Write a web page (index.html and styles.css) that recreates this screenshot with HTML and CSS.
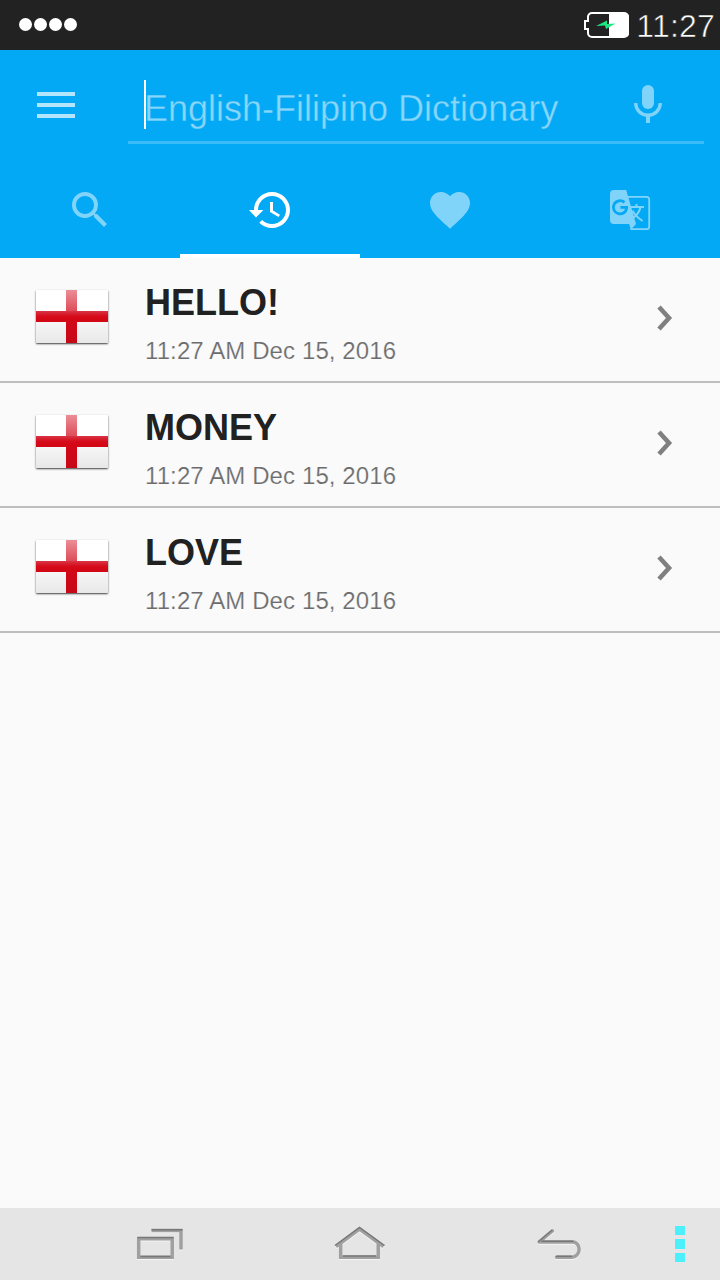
FILE: index.html
```html
<!DOCTYPE html>
<html lang="en">
<head>
    <meta charset="UTF-8">
    <meta name="viewport" content="width=device-width, initial-scale=1.0">
    <title>English-Filipino Dictionary</title>
    <link rel="stylesheet" href="styles.css">
</head>
<body>
    <div class="status-bar">
        <div class="dots"><span></span><span></span><span></span><span></span></div>
        <div class="status-right">
            <svg class="battery" width="46" height="26" viewBox="0 0 46 26">
                <path d="M8 1h32a4 4 0 0 1 4 4v16a4 4 0 0 1-4 4H8a4 4 0 0 1-4-4v-4H1V9h3V5a4 4 0 0 1 4-4z" fill="none" stroke="#fff" stroke-width="2"/>
                <path d="M25 1h16a4 4 0 0 1 4 4v16a4 4 0 0 1-4 4H25z" fill="#fff"/>
                <path d="M12 14l11-5.500v3.500l8.500-.5-9.500 5.500-1-3.500z" fill="#1de783"/>
            </svg>
            <span class="clock">11:27</span>
        </div>
    </div>

    <header class="header">
        <div class="toolbar">
            <div class="menu"><span></span><span></span><span></span></div>
            <div class="search-field">
                <div class="caret"></div>
                <div class="placeholder">English-Filipino Dictionary</div>
                <svg class="icon mic faded" viewBox="0 0 24 24">
                    <path d="M12 2a3 3 0 0 1 3 3v6a3 3 0 0 1-6 0V5a3 3 0 0 1 3-3z"/>
                    <path d="M19 11c0 3.530-2.610 6.440-6 6.930V21h-2v-3.070c-3.390-.49-6-3.400-6-6.930h1.700a5.300 5.300 0 0 0 10.600 0z"/>
                </svg>
            </div>
        </div>
        <nav class="tabs">
            <div class="tab">
                <svg class="icon faded" viewBox="0 0 24 24"><path d="M15.500 14h-.79l-.28-.27A6.471 6.471 0 0 0 16 9.500 6.500 6.500 0 1 0 9.500 16c1.610 0 3.090-.59 4.230-1.570l.27.28v.79l5 4.990L20.490 19l-4.990-5zm-6 0C7.010 14 5 11.990 5 9.500S7.010 5 9.500 5 14 7.010 14 9.500 11.990 14 9.500 14z"/></svg>
            </div>
            <div class="tab active">
                <svg class="icon" viewBox="0 0 24 24"><path d="M13 3c-4.970 0-9 4.030-9 9H1.500l3.500 3.700L8.700 12H6c0-3.870 3.130-7 7-7s7 3.130 7 7-3.130 7-7 7c-1.930 0-3.680-.79-4.940-2.060l-1.420 1.420C8.270 19.990 10.510 21 13 21c4.970 0 9-4.030 9-9s-4.030-9-9-9zm-1 5v5l4.280 2.540.72-1.210-3.500-2.080V8H12z"/></svg>
            </div>
            <div class="tab">
                <svg class="icon faded" viewBox="0 0 24 24"><path d="M12 21.350l-1.450-1.320C5.400 15.360 2 12.280 2 8.500 2 5.420 4.420 3 7.500 3c1.740 0 3.410.81 4.500 2.090C13.090 3.810 14.760 3 16.500 3 19.580 3 22 5.420 22 8.500c0 3.780-3.400 6.860-8.550 11.540L12 21.350z"/></svg>
            </div>
            <div class="tab">
                <svg class="icon faded" viewBox="0 0 24 24">
                    <path d="M4 2h6.100L15 19l-2.600 2.700-.8-2.700H4a2 2 0 0 1-2-2V4a2 2 0 0 1 2-2z"/>
                    <path d="M11 5.400h9.200a1.400 1.400 0 0 1 1.400 1.400v13.400a1.400 1.400 0 0 1-1.400 1.400H12.200" fill="none" stroke="#fff" stroke-width=".9"/>
                    <path d="M9.200 8.200A3.300 3.300 0 1 0 10.300 10.700H7.200" fill="none" stroke="#03a9f4" stroke-width="1.400"/>
                    <path d="M12.300 10.500H19M15.200 9v1.500M17.300 10.500q-.9 3.700-4 5.500M13.300 12.300q1.300 2.700 5 5.200" fill="none" stroke="#fff" stroke-width="1"/>
                </svg>
            </div>
        </nav>
    </header>

    <main class="history">
        <div class="row">
            <div class="flag"></div>
            <div class="entry">
                <div class="word">HELLO!</div>
                <div class="date">11:27 AM Dec 15, 2016</div>
            </div>
            <svg class="chevron" viewBox="0 0 18 28"><path d="M3 3l10 11L3 25"/></svg>
        </div>
        <div class="row">
            <div class="flag"></div>
            <div class="entry">
                <div class="word">MONEY</div>
                <div class="date">11:27 AM Dec 15, 2016</div>
            </div>
            <svg class="chevron" viewBox="0 0 18 28"><path d="M3 3l10 11L3 25"/></svg>
        </div>
        <div class="row">
            <div class="flag"></div>
            <div class="entry">
                <div class="word">LOVE</div>
                <div class="date">11:27 AM Dec 15, 2016</div>
            </div>
            <svg class="chevron" viewBox="0 0 18 28"><path d="M3 3l10 11L3 25"/></svg>
        </div>
    </main>

    <footer class="nav-bar">
        <!-- recent apps -->
        <svg class="nav-icon" viewBox="0 0 56 40">
            <path class="base" d="M6.700 14.700h33.500v18.600H6.700zM19.500 6.500h29.500v19"/>
            <path class="shade" d="M5.500 13.500h36M8.500 32.500h30M19.500 5.700h31"/>
        </svg>
        <!-- home -->
        <svg class="nav-icon" viewBox="0 0 56 40">
            <path class="base" d="M8.700 18v15.300h37.500V18M4 22.500l23.500-17.300L51.500 22.500"/>
            <path class="shade" d="M11 32h33M3 21.500l24.500-18 25 18"/>
        </svg>
        <!-- back -->
        <svg class="nav-icon back" viewBox="0 0 56 40">
            <path class="base" d="M20.300 7L7.300 18h33.200a6.500 6.500 0 0 1 6.500 6.500v1.500a7.200 7.200 0 0 1-7.200 7.200H24.500"/>
            <path class="shade" d="M19.800 6.200L6.500 17.500M10 17.200h31M24.500 32.300h15"/>
        </svg>
        <div class="more"><span></span><span></span><span></span></div>
    </footer>
</body>
</html>
```
FILE: styles.css
```css
* {
    margin: 0;
    padding: 0;
    box-sizing: border-box;
}

body {
    width: 720px;
    height: 1280px;
    display: flex;
    flex-direction: column;
    background: #fafafa;
    font-family: "Liberation Sans", Arial, sans-serif;
    overflow: hidden;
}

.status-bar {
    height: 50px;
    display: flex;
    justify-content: space-between;
    align-items: center;
    padding: 0 5px 0 19px;
    background: #222;
    color: #fff;
}

.dots {
    display: flex;
    gap: 2px;
    padding-bottom: 1px;
}

.dots span {
    width: 13px;
    height: 13px;
    border-radius: 50%;
    background: #fff;
}

.status-right {
    display: flex;
    align-items: center;
    gap: 6px;
}

.clock {
    font-size: 32px;
    line-height: 36px;
    padding-top: 2px;
    letter-spacing: 0.2px;
    -webkit-text-stroke: 0.6px #222;
}

.header {
    height: 208px;
    background: #03a9f4;
}

.toolbar {
    height: 112px;
    display: flex;
    align-items: flex-start;
    padding: 0 16px 0 37px;
}

.menu {
    display: flex;
    flex-direction: column;
    gap: 7px;
    width: 38px;
    margin: 42px 53px 0 0;
}

.menu span {
    height: 4px;
    background: rgba(255, 255, 255, 0.7);
}

.search-field {
    flex: 1;
    height: 94px;
    display: flex;
    align-items: flex-start;
    padding: 30px 32px 0 16px;
    border-bottom: 3px solid rgba(255, 255, 255, 0.22);
}

.caret {
    width: 2px;
    height: 49px;
    margin-right: -2px;
    background: #fff;
}

.placeholder {
    flex: 1;
    font-size: 36px;
    line-height: 58px;
    white-space: nowrap;
    color: rgba(255, 255, 255, 0.55);
    -webkit-text-stroke: 0.4px #03a9f4;
}

.icon {
    width: 48px;
    height: 48px;
    fill: #fff;
}

.mic {
    margin-top: 1px;
}

.faded {
    opacity: 0.5;
}

.tabs {
    display: grid;
    grid-template-columns: repeat(4, 1fr);
    height: 96px;
}

.tab {
    display: flex;
    justify-content: center;
    padding-top: 24px;
    border-bottom: 4px solid transparent;
}

.tab.active {
    border-bottom-color: #fff;
}

.history {
    flex: 1;
}

.row {
    display: flex;
    align-items: flex-start;
    height: 125px;
    padding: 24px 46px 0 36px;
    border-bottom: 2px solid #bdbdbd;
}

.flag {
    width: 72px;
    height: 53px;
    margin: 8px 37px 0 0;
    border-radius: 1px;
    background:
        linear-gradient(#d83545, #d60a1a 50%, #d10715) 0 21px / 72px 11px no-repeat,
        linear-gradient(#ec8d96, #dd4d5a 21px, #d1081a 32px, #c60817) 30px 0 / 11px 53px no-repeat,
        linear-gradient(#fff 50%, #f6f6f6 60%, #e8e8e8);
    box-shadow: 0 1px 2px rgba(0, 0, 0, 0.75);
}

.entry {
    flex: 1;
}

.word {
    font-size: 36px;
    font-weight: bold;
    line-height: 42px;
    color: #212121;
}

.date {
    margin-top: 13px;
    font-size: 24px;
    line-height: 28px;
    letter-spacing: 0.1px;
    color: #6c6c6c;
    -webkit-text-stroke: 0.2px #fafafa;
}

.chevron {
    width: 18px;
    height: 28px;
    margin-top: 22px;
}

.chevron path {
    fill: none;
    stroke: #808080;
    stroke-width: 4.6;
}

.nav-bar {
    display: grid;
    grid-template-columns: repeat(3, 200px) 40px;
    align-items: center;
    justify-items: center;
    height: 72px;
    padding-left: 60px;
    background: #e5e5e5;
}

.nav-icon {
    width: 56px;
    height: 40px;
    fill: none;
    filter: drop-shadow(0 1px 0 #f5f5f5);
}

.back {
    stroke-linejoin: round;
    stroke-linecap: round;
}

.base {
    stroke: #a0a0a0;
    stroke-width: 3.5;
}

.shade {
    stroke: #777;
    stroke-width: 1.5;
}

.more {
    display: flex;
    flex-direction: column;
    gap: 4px;
}

.more span {
    width: 10px;
    height: 9.4px;
    background: #4cf0fa;
}
```
